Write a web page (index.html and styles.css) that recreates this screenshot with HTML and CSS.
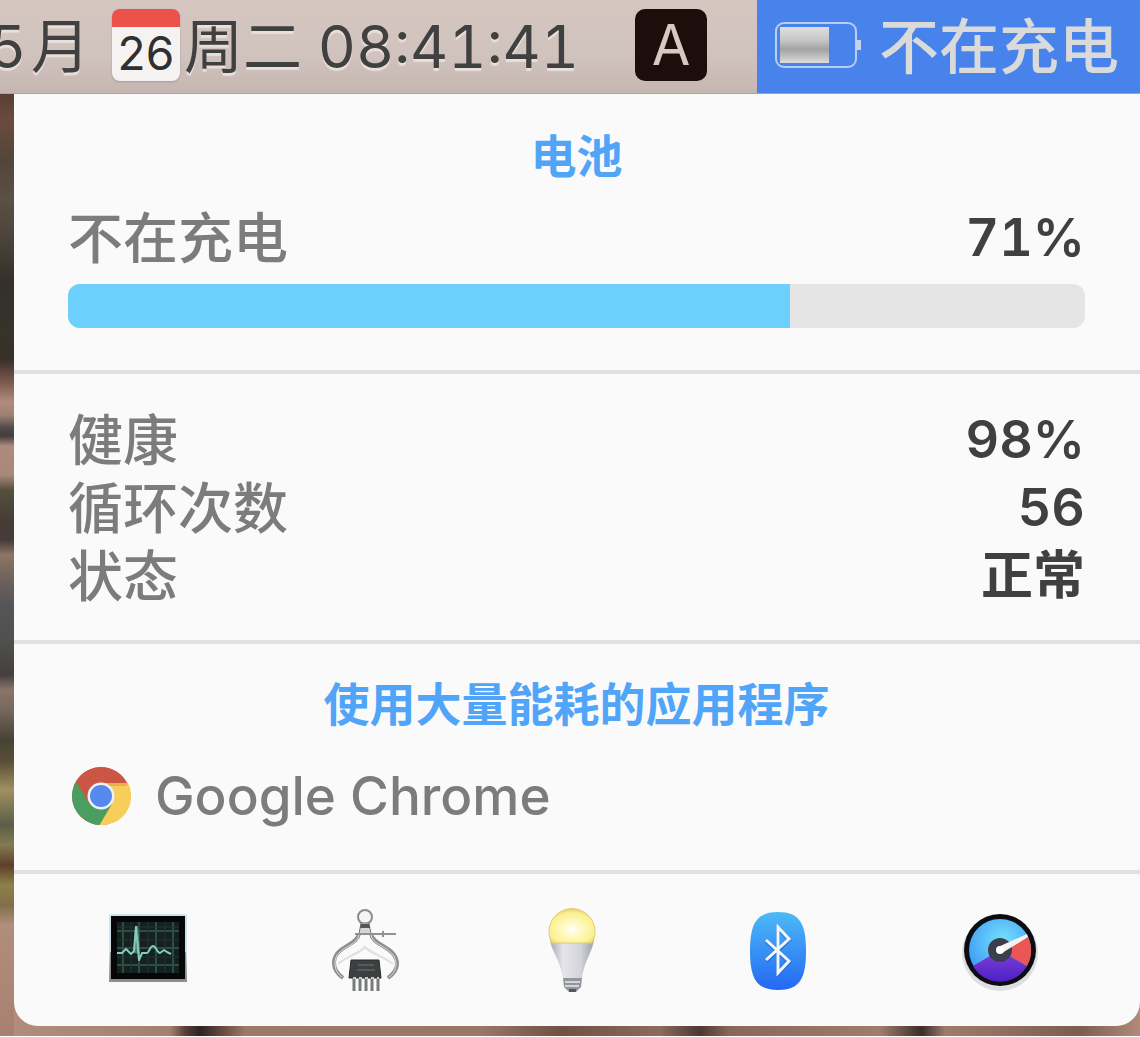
FILE: index.html
```
<!DOCTYPE html>
<html lang="zh-CN">
<head>
    <meta charset="UTF-8">
    <meta name="viewport" content="width=device-width, initial-scale=1.0">
    <title>电池</title>
    <link rel="stylesheet" href="styles.css">
</head>
<body>
    <div class="desktop">
        <header class="menubar">
            <div class="month"><span>5</span><span>月</span></div>
            <div class="calendar"><span>26</span></div>
            <time class="clock">周二 08:41:41</time>
            <button class="input-source" type="button">A</button>
            <button class="battery-item" type="button">
                <svg class="battery-icon" viewBox="0 0 86 46" aria-hidden="true">
                    <defs>
                        <linearGradient id="charge" x1="0" y1="0" x2="0" y2="1">
                            <stop offset="0" stop-color="#dedede"/>
                            <stop offset="0.35" stop-color="#c8c8c8"/>
                            <stop offset="0.62" stop-color="#a2a2a2"/>
                            <stop offset="1" stop-color="#dcdcdc"/>
                        </linearGradient>
                    </defs>
                    <rect x="1" y="1" width="80" height="44" rx="8" fill="none" stroke="#b9cdf0" stroke-width="2"/>
                    <rect x="5" y="5" width="49" height="36" fill="url(#charge)"/>
                    <rect x="81" y="18" width="5" height="10" fill="#c4d4ef"/>
                </svg>
                <span>不在充电</span>
            </button>
        </header>

        <main class="panel">
            <section class="section charge">
                <h2>电池</h2>
                <div class="row">
                    <label for="level">不在充电</label>
                    <strong>71%</strong>
                </div>
                <progress id="level" value="71" max="100"></progress>
            </section>

            <section class="section">
                <dl class="stats">
                    <div class="row"><dt>健康</dt><dd>98%</dd></div>
                    <div class="row"><dt>循环次数</dt><dd>56</dd></div>
                    <div class="row"><dt>状态</dt><dd>正常</dd></div>
                </dl>
            </section>

            <section class="section apps">
                <h2>使用大量能耗的应用程序</h2>
                <div class="app">
                    <svg class="app-icon" viewBox="0 0 60 60" aria-hidden="true">
                        <circle cx="30" cy="30" r="29" fill="#cc5644"/>
                        <path d="M5 15.500A29 29 0 0 0 28.500 59L42 37L30 30L18 37Z" fill="#4a9e62"/>
                        <path d="M57 17A29 29 0 0 1 28.500 59L41 38L30 30V17Z" fill="#f8ce5b"/>
                        <path d="M5.500 15L18 37L30 30L26 17H56A29 29 0 0 0 5.500 15Z" fill="#cc5644"/>
                        <path d="M32 17H57L56 20H38Z" fill="#dc9a4e" opacity="0.600"/>
                        <circle cx="30" cy="30" r="13.500" fill="#eef1f6"/>
                        <circle cx="30" cy="30" r="11" fill="#5689ee"/>
                    </svg>
                    <span>Google Chrome</span>
                </div>
            </section>

            <nav class="toolbar">
                <button type="button" aria-label="活动监视器">
                    <svg width="84" height="92" viewBox="0 0 84 92">
                        <rect x="3" y="10" width="78" height="66" rx="2" fill="#cfe2ea"/>
                        <path d="M4 48H80L81 78H3Z" fill="#8b8d8e"/>
                        <rect x="5" y="12" width="74" height="63" fill="#050807"/>
                        <rect x="11" y="18" width="62" height="51" fill="#15211f"/>
                        <path d="M17 18V69M33 18V69M50 18V69M67 18V69M11 27H73M11 44H73M11 61H73" stroke="#2c4d45" stroke-width="2" fill="none"/>
                        <path d="M11 23H73M11 36H73M11 53H73M25 18V69M42 18V69M59 18V69" stroke="#20352f" stroke-width="1" fill="none"/>
                        <path d="M27 49L29 22H32L34 50Z" fill="#6fb5a2" opacity="0.600"/>
                        <path d="M11 49H16L20 45L25 50L28 47L30 23L33 56L36 49H41C43 49 44 42 47 42S51 49 54 49L58 46L61 48L65 50" fill="none" stroke="#84cbb8" stroke-width="2" stroke-linejoin="round"/>
                    </svg>
                </button>
                <button type="button" aria-label="系统信息">
                    <svg width="70" height="92" viewBox="0 0 70 92">
                        <circle cx="35" cy="13" r="7" fill="#f4f4f4" stroke="#898d8c" stroke-width="2"/>
                        <path d="M31 19H39L41 30H29Z" fill="#d5d7d6" stroke="#777" stroke-width="1"/>
                        <path d="M31 20H39L40 24H30Z" fill="#555"/>
                        <path d="M25 30H66M53 27V33" stroke="#8f9392" stroke-width="2"/>
                        <path d="M29 30C27 42 4 42 4 59C4 67 9 71 13 74M41 30C43 42 67 43 67 60C67 67 62 71 58 74" fill="none" stroke="#8c908f" stroke-width="4"/>
                        <path d="M29 31C27 43 5 43 5 59C5 67 9 71 12 73M41 31C43 43 66 43 66 60C66 67 62 71 59 73" fill="none" stroke="#dcdedd" stroke-width="1"/>
                        <path d="M8 60C19 51 29 50 35 43C41 50 52 51 63 60" fill="none" stroke="#dedfdf" stroke-width="2"/>
                        <path d="M24 72V87M30 74V87M36 74V87M42 74V87M48 72V87" stroke="#777b7a" stroke-width="3"/>
                        <path d="M21 56H49L51 74H19Z" fill="#3d3f40" stroke="#292b2c" stroke-width="1"/>
                        <path d="M28 61H44M27 66H45" stroke="#57595a" stroke-width="2"/>
                        <path d="M23 74H49" stroke="#c9cccb" stroke-width="2" stroke-dasharray="3 3"/>
                    </svg>
                </button>
                <button type="button" aria-label="节能">
                    <svg width="64" height="92" viewBox="0 0 64 92">
                        <defs>
                            <radialGradient id="glow" cx="0.5" cy="0.6" r="0.6">
                                <stop offset="0" stop-color="#ffffff"/>
                                <stop offset="0.3" stop-color="#fffbc8"/>
                                <stop offset="0.8" stop-color="#fbf191"/>
                                <stop offset="1" stop-color="#e5cc6d"/>
                            </radialGradient>
                            <linearGradient id="bulb-body">
                                <stop offset="0" stop-color="#a9aab3"/>
                                <stop offset="0.3" stop-color="#e5e5ea"/>
                                <stop offset="0.7" stop-color="#d3d3da"/>
                                <stop offset="1" stop-color="#9fa1aa"/>
                            </linearGradient>
                        </defs>
                        <path d="M23 74H42L41 83L36 88H29L24 83Z" fill="#92969a"/>
                        <path d="M25 78H40M25 82H39" stroke="#d3d6d8" stroke-width="2"/>
                        <path d="M29 85H36V88H29Z" fill="#55585a"/>
                        <path d="M10 35H54C53 47 45 55 42 74H23C20 55 11 47 10 35Z" fill="url(#bulb-body)"/>
                        <path d="M12 39A23 23 0 1 1 52 39Z" fill="url(#glow)" stroke="#e3cc77" stroke-width="1"/>
                    </svg>
                </button>
                <button type="button" aria-label="蓝牙">
                    <svg width="68" height="92" viewBox="0 0 68 92">
                        <defs>
                            <linearGradient id="blue" x1="0" y1="0" x2="0" y2="1">
                                <stop offset="0" stop-color="#4dbaf6"/>
                                <stop offset="1" stop-color="#2468f3"/>
                            </linearGradient>
                        </defs>
                        <path d="M34 8C56 8 62 20 62 47S56 86 34 86S6 74 6 47S12 8 34 8Z" fill="url(#blue)"/>
                        <path d="M22 37L45 58L34 70V24L45 36L22 57" fill="none" stroke="#205bbb" stroke-opacity="0.500" stroke-width="4"/>
                        <path d="M22 36L45 57L34 69V23L45 35L22 56" fill="none" stroke="#f3f7fb" stroke-width="3"/>
                    </svg>
                </button>
                <button type="button" aria-label="iStat Menus">
                    <svg width="96" height="92" viewBox="0 0 96 92">
                        <defs>
                            <radialGradient id="sky" cx="0.55" cy="0.35" r="0.6">
                                <stop offset="0" stop-color="#76e1fc"/>
                                <stop offset="1" stop-color="#42a0f6"/>
                            </radialGradient>
                            <linearGradient id="violet" x1="0" y1="0" x2="0" y2="1">
                                <stop offset="0" stop-color="#8140d6"/>
                                <stop offset="1" stop-color="#4c20c5"/>
                            </linearGradient>
                        </defs>
                        <circle cx="48" cy="49" r="38" fill="#dedee2"/>
                        <circle cx="48" cy="46" r="36" fill="#0c0d12"/>
                        <circle cx="48" cy="46" r="31" fill="url(#sky)"/>
                        <path d="M48 46L21 62A31 31 0 0 0 75 62Z" fill="url(#violet)"/>
                        <path d="M48 46L75 62A31 31 0 0 0 75 31Z" fill="#eb5654"/>
                        <circle cx="48" cy="46" r="12" fill="#3d3e4d"/>
                        <path d="M46 43L75 30L76 33L50 49Z" fill="#f6f0f0"/>
                        <circle cx="48" cy="46" r="4" fill="#fff"/>
                    </svg>
                </button>
            </nav>
        </main>
    </div>
</body>
</html>
```
FILE: styles.css
```
* {
    margin: 0;
    padding: 0;
    box-sizing: border-box;
}
body {
    background-color: #fff;
    font-family: Inter, "Noto Sans CJK SC", sans-serif;
    color: #404040;
}
button {
    border: none;
    background: none;
    font-family: inherit;
    cursor: pointer;
}
svg {
    display: block;
    flex-shrink: 0;
}

/* wallpaper */
.desktop {
    padding-bottom: 10px;
    background-image:
        linear-gradient(to bottom, #5a3d34 94px, #6a4b3e 120px, #54453a 160px, #5a5044 200px, #4b433b 240px, #35302a 280px, #34342a 330px, #3a3028 360px, #845f54 385px, #b08b7d 402px, #a08075 415px, #504a4a 428px, #453c3e 436px, #ad8a7c 446px, #a8887a 475px, #55503c 490px, #463c35 520px, #453c38 540px, #8c7564 555px, #6d625c 580px, #555557 605px, #50504f 640px, #45403f 675px, #8a7468 690px, #76685e 710px, #464235 740px, #5a5038 762px, #a09060 790px, #5a5e48 825px, #857a50 845px, #5c4028 865px, #8d8048 885px, #816f4a 905px, #b18d7d 925px, #a88070 100%),
        linear-gradient(to right, #b48e7c 0, #a58070 170px, #5a4038 185px, #2b2323 200px, #654a40 222px, #9b7868 245px, #9b7768 480px, #705146 560px, #8d6a5c 660px, #4d3832 700px, #8a675a 730px, #a17c6c 880px, #3b2c28 922px, #a17b6c 945px, #7d5d50 1080px, #b18b7b 100%);
    background-repeat: no-repeat;
    background-size: 14px 100%, 100% 100%;
}

.menubar {
    display: flex;
    justify-content: flex-end;
    align-items: center;
    height: 94px;
    overflow: hidden;
    white-space: nowrap;
    background-image: linear-gradient(to bottom, #d5c6c0, #d0c2bc 60%, #c5b6b1);
    border-bottom: 1px solid #b2a29d;
    font-size: 59px;
    line-height: 94px;
}
.month, .clock {
    text-shadow: 0 3px 1px #e9dfdb;
}
.month {
    display: flex;
    gap: 6px;
}
.calendar {
    flex-shrink: 0;
    width: 68px;
    height: 72px;
    margin: 0 4px 4px 22px;
    border-top: 18px solid #ec514b;
    border-radius: 8px;
    background-color: #f5f3f2;
    box-shadow: 0 1px 2px #a99a95;
    color: #303030;
    font-size: 46px;
    line-height: 52px;
    text-align: center;
}
.clock {
    margin-right: 56px;
    font-variant-numeric: tabular-nums;
}
.input-source {
    flex-shrink: 0;
    width: 72px;
    height: 72px;
    margin: 0 50px 4px 0;
    border-radius: 10px;
    background-color: #1d0e0b;
    color: #d6c8c2;
    font-size: 56px;
    line-height: 72px;
}
.battery-item {
    display: flex;
    align-items: center;
    gap: 18px;
    height: 94px;
    padding: 0 21px 0 18px;
    background-color: #4883eb;
    color: #dadada;
    font-size: 60px;
    font-weight: 500;
    line-height: 94px;
}
.battery-icon {
    width: 86px;
    height: 46px;
    margin-bottom: 4px;
}

.panel {
    margin-left: 14px;
    background-color: #fafafa;
    border-radius: 0 0 24px 24px;
}
.section {
    padding: 32px 55px 30px 54px;
    border-bottom: 4px solid #e0e0e0;
}
.charge {
    padding-top: 34px;
    padding-bottom: 42px;
}
.apps {
    padding-bottom: 40px;
}
h2 {
    color: #50a5f8;
    font-size: 46px;
    font-weight: 700;
    line-height: 56px;
    text-align: center;
}
.row {
    display: flex;
    justify-content: space-between;
    color: #7c7c7c;
    font-size: 55px;
    line-height: 68px;
}
.row label, .row dt {
    font-weight: 500;
}
.row strong, .row dd {
    color: #404040;
    font-size: 52px;
    font-weight: 600;
    font-variant-numeric: tabular-nums;
}
.charge .row {
    margin-top: 20px;
}
progress {
    display: block;
    width: 100%;
    height: 44px;
    margin-top: 12px;
    border: none;
    border-radius: 12px;
    overflow: hidden;
    appearance: none;
    background-color: #e5e5e5;
}
progress::-webkit-progress-bar {
    background-color: #e5e5e5;
}
progress::-webkit-progress-value {
    background-color: #6dcffb;
}
progress::-moz-progress-bar {
    background-color: #6dcffb;
}

.app {
    display: flex;
    align-items: center;
    gap: 24px;
    margin-top: 30px;
    padding-left: 3px;
    color: #7c7c7c;
    font-size: 53px;
    font-weight: 500;
    line-height: 68px;
}
.app-icon {
    width: 60px;
    height: 60px;
}
.toolbar {
    display: flex;
    justify-content: space-between;
    align-items: center;
    padding: 30px 92px;
}
```
